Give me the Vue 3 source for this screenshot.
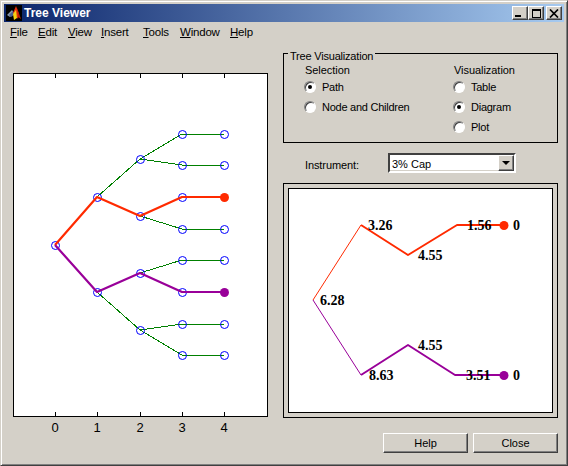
<script setup>
const menus = [
  { key: 'F', rest: 'ile' },
  { key: 'E', rest: 'dit' },
  { key: 'V', rest: 'iew' },
  { key: 'I', rest: 'nsert' },
  { key: 'T', rest: 'ools' },
  { key: 'W', rest: 'indow' },
  { key: 'H', rest: 'elp' }
]

const xs = [55, 97, 140, 182, 224]
const root = [55, 245]
const l1 = { a: [97, 197], b: [97, 292] }
const l2 = { a: [140, 159], b: [140, 216], c: [140, 273], d: [140, 330] }
const l3 = [134, 165, 197, 229, 260, 292, 324, 355]

const green = [
  [l1.a, l2.a], [l1.b, l2.d],
  [l2.a, [182, 134]], [l2.a, [182, 165]],
  [l2.b, [182, 229]], [l2.c, [182, 260]],
  [l2.d, [182, 324]], [l2.d, [182, 355]],
  [[182, 134], [224, 134]], [[182, 165], [224, 165]],
  [[182, 229], [224, 229]], [[182, 260], [224, 260]],
  [[182, 324], [224, 324]], [[182, 355], [224, 355]]
]

const nodes = [
  root, l1.a, l1.b, l2.a, l2.b, l2.c, l2.d,
  ...l3.map((y) => [182, y]),
  ...l3.filter((y) => y !== 197 && y !== 292).map((y) => [224, y])
]

const pts = (a) => a.map((p) => p.join(',')).join(' ')
const redPath = pts([root, l1.a, l2.b, [182, 197], [224, 197]])
const purplePath = pts([root, l1.b, l2.c, [182, 292], [224, 292]])

const labels = [
  { t: '6.28', x: 320, y: 305 },
  { t: '3.26', x: 368, y: 230 },
  { t: '4.55', x: 418, y: 260 },
  { t: '1.56', x: 467, y: 230 },
  { t: '0', x: 513, y: 230 },
  { t: '8.63', x: 369, y: 380 },
  { t: '4.55', x: 418, y: 350 },
  { t: '3.51', x: 466, y: 380 },
  { t: '0', x: 513, y: 380 }
]

const selection = [
  { label: 'Path', on: true },
  { label: 'Node and Children', on: false }
]
const visualization = [
  { label: 'Table', on: false },
  { label: 'Diagram', on: true },
  { label: 'Plot', on: false }
]
</script>

<template>
  <div class="window">
    <div class="titlebar">
      <svg class="appicon" width="16" height="16" viewBox="0 0 16 16">
        <rect width="16" height="16" fill="#000" />
        <polygon points="1,10 6,5 8,8 4,12" fill="#8a9ab0" />
        <polygon points="3,10 7,6 8,10 5,12" fill="#4a5f90" />
        <polygon points="7,8 10,1 13,9 12,14 9,9" fill="#e83010" />
        <polygon points="7,9 10,5 11,13 8,15" fill="#f8d010" />
        <polygon points="11,3 15,14 12,12" fill="#c02000" />
      </svg>
      <span class="title">Tree Viewer</span>
      <div class="caption">
        <button class="capbtn"><i class="glyph-min"></i></button>
        <button class="capbtn"><i class="glyph-max"></i></button>
        <button class="capbtn close">
          <svg width="10" height="9" viewBox="0 0 10 9">
            <path d="M1 0.5 L9 8.5 M9 0.5 L1 8.5" stroke="#000" stroke-width="1.7" fill="none" />
          </svg>
        </button>
      </div>
    </div>

    <nav class="menubar">
      <span v-for="m in menus" :key="m.key" class="menu"><u>{{ m.key }}</u>{{ m.rest }}</span>
    </nav>

    <main class="body">
      <svg class="axes" width="256" height="372" viewBox="13 70 256 372">
        <rect x="13.5" y="73.5" width="254" height="343" fill="#fff" stroke="#000" />
        <g stroke="#000">
          <g v-for="x in xs" :key="x">
            <line :x1="x + 0.5" :x2="x + 0.5" y1="74" y2="78" />
            <line :x1="x + 0.5" :x2="x + 0.5" y1="412" y2="416" />
          </g>
        </g>
        <polyline
          v-for="(s, i) in green"
          :key="i"
          :points="pts(s)"
          class="tree-green"
        />
        <circle
          v-for="(n, i) in nodes"
          :key="'n' + i"
          :cx="n[0] + 0.5"
          :cy="n[1] + 0.5"
          r="4"
          class="node"
        />
        <polyline :points="redPath" class="path-red" />
        <polyline :points="purplePath" class="path-purple" />
        <circle cx="224.5" cy="197.5" r="4.5" fill="#ff2a00" />
        <circle cx="224.5" cy="292.5" r="4.5" fill="#990099" />
        <text v-for="(x, i) in xs" :key="'t' + i" :x="x" y="432" class="tick">{{ i }}</text>
      </svg>

      <div class="side">
        <section class="group">
          <span class="legend">Tree Visualization</span>
          <div class="col col-sel">
            <div class="heading">Selection</div>
            <label v-for="r in selection" :key="r.label" class="radio">
              <span class="dot" :class="{ on: r.on }"></span>{{ r.label }}
            </label>
          </div>
          <div class="col col-vis">
            <div class="heading">Visualization</div>
            <label v-for="r in visualization" :key="r.label" class="radio">
              <span class="dot" :class="{ on: r.on }"></span>{{ r.label }}
            </label>
          </div>
        </section>

        <div class="instrument">
          <span class="inst-label">Instrument:</span>
          <div class="combo">
            <span class="combo-text">3% Cap</span>
            <span class="combo-btn"><i class="arrow"></i></span>
          </div>
        </div>

        <section class="panel">
          <svg class="diagram" width="263" height="223" viewBox="289 189 263 223">
            <polyline points="313,300 361,225" class="d-red thin" />
            <polyline points="361,225 408,255 457,225 504,225" class="d-red" />
            <polyline points="313,300 361,375" class="d-purple thin" />
            <polyline points="361,375 408,345 455,375 504,375" class="d-purple" />
            <circle cx="504" cy="225.5" r="4.5" fill="#ff2a00" />
            <circle cx="504" cy="375.5" r="4.5" fill="#990099" />
            <text v-for="(l, i) in labels" :key="i" :x="l.x" :y="l.y" class="value">{{ l.t }}</text>
          </svg>
        </section>

        <div class="actions">
          <button class="btn">Help</button>
          <button class="btn">Close</button>
        </div>
      </div>
    </main>
  </div>
</template>

<style scoped>
.window {
  box-sizing: border-box;
  width: 568px;
  height: 466px;
  padding: 3px;
  background: #d4d0c8;
  border: 1px solid;
  border-color: #d4d0c8 #404040 #404040 #d4d0c8;
  box-shadow: inset 1px 1px 0 #fff, inset -1px -1px 0 #808080;
  font-family: "Liberation Sans", Arial, sans-serif;
  font-size: 11px;
  color: #000;
  display: flex;
  flex-direction: column;
  overflow: hidden;
}
.titlebar {
  height: 18px;
  flex: none;
  display: flex;
  align-items: center;
  padding: 0 2px;
  background: linear-gradient(90deg, #0a246a, #a6caf0);
  color: #fff;
}
.appicon {
  flex: none;
  margin-right: 2px;
}
.title {
  font-weight: bold;
  font-size: 12px;
}
.caption {
  margin-left: auto;
  display: flex;
}
.capbtn {
  box-sizing: border-box;
  width: 16px;
  height: 14px;
  padding: 0;
  background: #d4d0c8;
  border: 1px solid;
  border-color: #fff #404040 #404040 #fff;
  box-shadow: inset -1px -1px 0 #808080;
  display: flex;
  align-items: center;
  justify-content: center;
}
.capbtn.close {
  margin-left: 2px;
}
.glyph-min {
  display: block;
  width: 6px;
  height: 2px;
  background: #000;
  margin: 6px 4px 0 0;
}
.glyph-max {
  display: block;
  box-sizing: border-box;
  width: 9px;
  height: 9px;
  border: 1px solid #000;
  border-top-width: 2px;
}
.menubar {
  height: 20px;
  flex: none;
  display: grid;
  grid-template-columns: 28px 30px 33px 42px 37px 50px 30px;
  align-items: center;
  padding-left: 6px;
}
.menu {
  font-size: 11.5px;
  letter-spacing: -0.2px;
}
.menu u {
  text-decoration: underline;
}
.body {
  flex: 1;
  display: flex;
  align-items: flex-start;
  padding-left: 9px;
}
.axes {
  flex: none;
  margin-top: 28px;
  display: block;
}
.tree-green {
  stroke: #008000;
  stroke-width: 1;
  fill: none;
  shape-rendering: crispEdges;
}
.node {
  fill: none;
  stroke: #0000ff;
  stroke-width: 1;
}
.path-red,
.path-purple {
  fill: none;
  stroke-width: 2.2;
  stroke-linejoin: round;
}
.path-red {
  stroke: #ff2a00;
}
.path-purple {
  stroke: #990099;
}
.tick {
  font-family: "Liberation Sans", Arial, sans-serif;
  font-size: 13px;
  text-anchor: middle;
  fill: #000;
}
.side {
  flex: none;
  width: 275px;
  margin-left: 14px;
  padding-top: 11px;
}
.group {
  box-sizing: border-box;
  height: 90px;
  border: 1px solid #000;
  position: relative;
  display: flex;
}
.legend {
  position: absolute;
  top: -5px;
  left: 4px;
  padding: 0 2px;
  background: #d4d0c8;
  line-height: 14px;
  font-size: 11px;
  letter-spacing: -0.2px;
}
.col {
  padding-top: 9px;
}
.col-sel {
  padding-left: 21px;
  width: 128px;
}
.col-vis {
  padding-left: 21px;
}
.heading {
  height: 14px;
  line-height: 14px;
  font-size: 11px;
  letter-spacing: -0.05px;
}
.radio {
  display: flex;
  align-items: center;
  height: 20px;
  margin-left: -1px;
  font-size: 11px;
  letter-spacing: -0.25px;
}
.dot {
  box-sizing: border-box;
  width: 12px;
  height: 12px;
  margin-right: 6px;
  border-radius: 50%;
  background: #fff;
  border: 1px solid;
  border-color: #808080 #fff #fff #808080;
  box-shadow: inset 1px 1px 0 #404040;
  flex: none;
  display: flex;
  align-items: center;
  justify-content: center;
}
.dot.on::after {
  content: "";
  width: 4px;
  height: 4px;
  border-radius: 50%;
  background: #000;
}
.instrument {
  display: flex;
  align-items: center;
  height: 20px;
  margin-top: 10px;
}
.inst-label {
  width: 83px;
  padding-left: 22px;
  padding-top: 3px;
  font-size: 11px;
  letter-spacing: -0.1px;
}
.combo {
  box-sizing: border-box;
  width: 128px;
  height: 20px;
  display: flex;
  align-items: stretch;
  background: #fff;
  border: 2px solid;
  border-color: #404040 #fff #fff #404040;
  box-shadow: inset -1px -1px 0 #d4d0c8;
}
.combo-text {
  flex: 1;
  line-height: 18px;
  padding-left: 2px;
  font-size: 11px;
}
.combo-btn {
  box-sizing: border-box;
  width: 16px;
  background: #d4d0c8;
  border: 1px solid;
  border-color: #fff #404040 #404040 #fff;
  box-shadow: inset -1px -1px 0 #808080;
  display: flex;
  align-items: center;
  justify-content: center;
}
.arrow {
  width: 0;
  height: 0;
  border: 4px solid transparent;
  border-top: 4px solid #000;
  border-bottom: 0;
}
.panel {
  box-sizing: border-box;
  margin-top: 10px;
  height: 235px;
  border: 1px solid #000;
  padding: 4px;
}
.diagram {
  display: block;
  box-sizing: content-box;
  border: 1px solid #000;
  background: #fff;
}
.d-red,
.d-purple {
  fill: none;
  stroke-width: 2;
  stroke-linejoin: round;
}
.d-red {
  stroke: #ff2a00;
}
.d-purple {
  stroke: #990099;
}
.thin {
  stroke-width: 1;
}
.value {
  font-family: "Liberation Serif", "Times New Roman", serif;
  font-weight: bold;
  font-size: 14px;
  fill: #000;
}
.actions {
  display: flex;
  justify-content: flex-end;
  gap: 5px;
  margin-top: 15px;
}
.btn {
  box-sizing: border-box;
  width: 85px;
  height: 20px;
  padding: 0;
  font-family: inherit;
  font-size: 11px;
  background: #d4d0c8;
  border: 1px solid;
  border-color: #fff #404040 #404040 #fff;
  box-shadow: inset -1px -1px 0 #808080;
  color: #000;
}
</style>
